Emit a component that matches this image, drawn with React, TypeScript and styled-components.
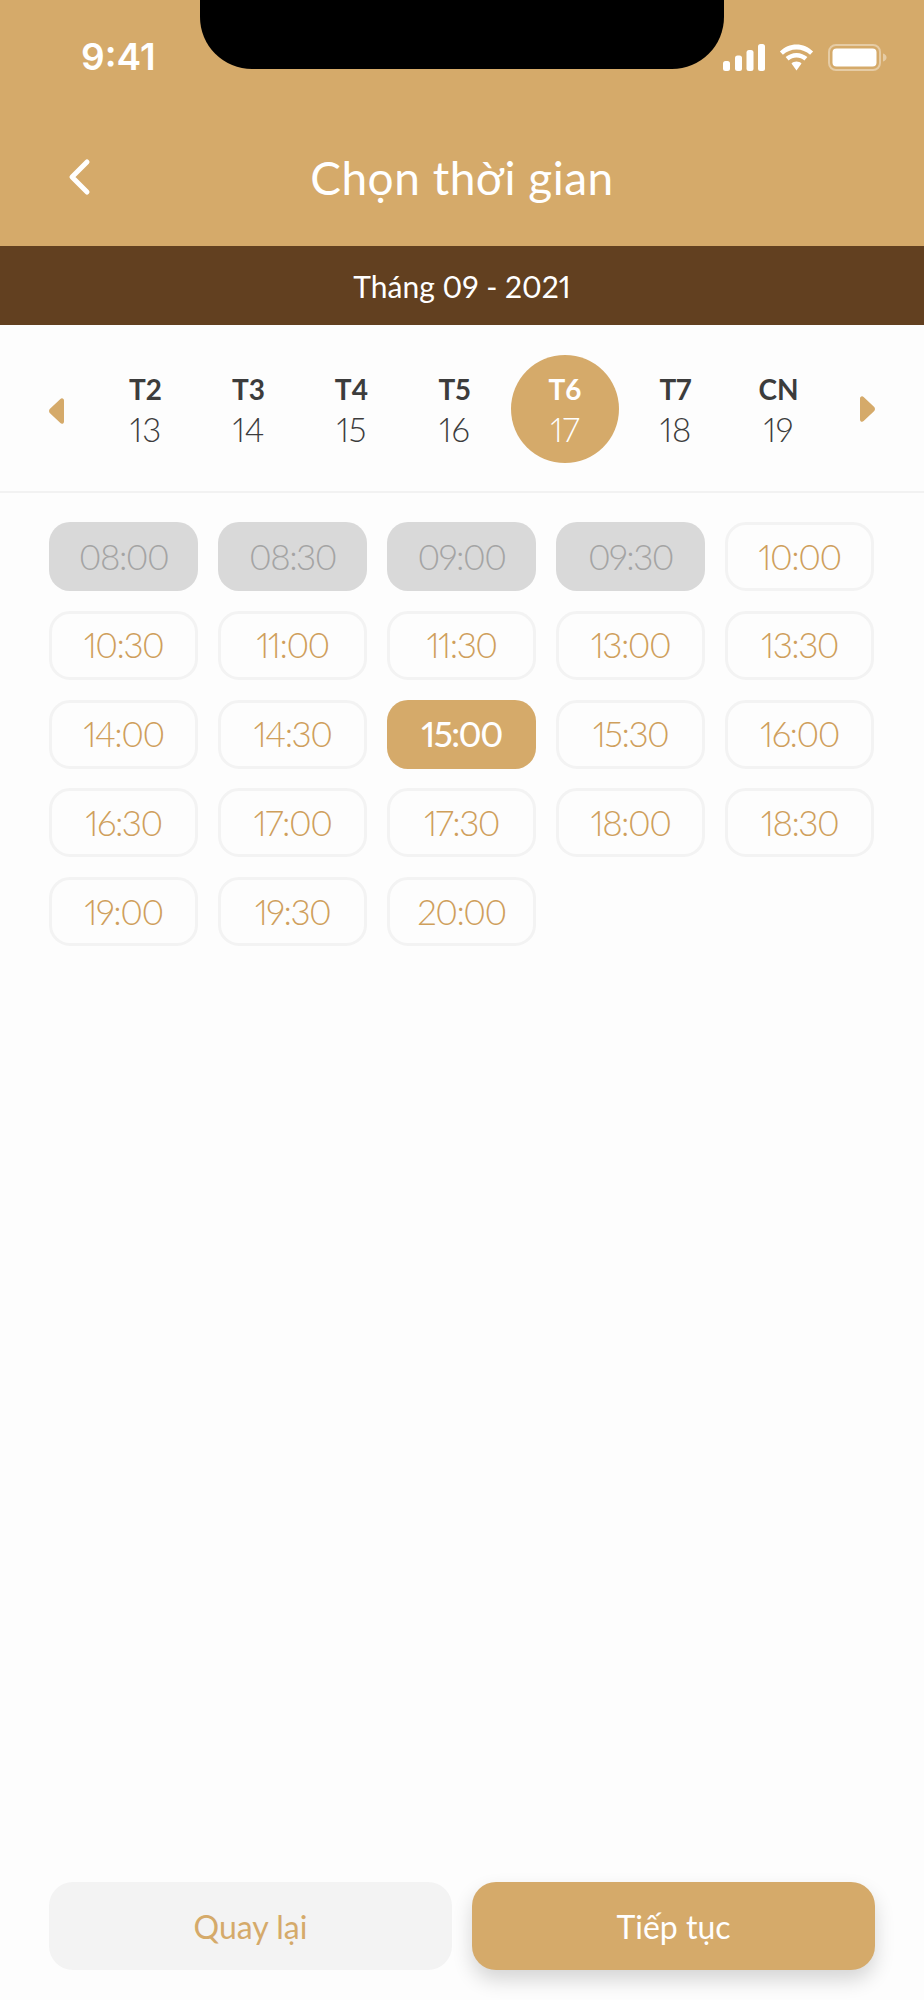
import React from "react";
import styled, { createGlobalStyle } from "styled-components";

const GlobalStyle = createGlobalStyle`
  html, body {
    margin: 0;
    padding: 0;
    background: #fdfdfd;
  }
  * {
    box-sizing: border-box;
  }
`;

const gold = "#d5aa6a";
const font = `"Lato", "Noto Sans", sans-serif`;

const Page = styled.div`
  position: relative;
  width: 924px;
  height: 2000px;
  display: flex;
  flex-direction: column;
  background: #fdfdfd;
  font-family: ${font};
  font-variant-numeric: proportional-nums;
  overflow: hidden;
`;

const Header = styled.header`
  height: 246px;
  background: ${gold};
  display: flex;
  flex-direction: column;
`;

const Notch = styled.div`
  position: absolute;
  top: 0;
  left: 200px;
  width: 524px;
  height: 69px;
  background: #000;
  border-radius: 0 0 52px 52px;
`;

const StatusBar = styled.div`
  height: 78px;
  padding: 36px 37px 0 81px;
  display: flex;
  justify-content: space-between;
  align-items: center;
`;

const Clock = styled.span`
  font-family: "Inter", sans-serif;
  font-size: 37px;
  font-weight: 600;
  color: #fff;
  line-height: 42px;
`;

const StatusIcons = styled.div`
  display: flex;
  align-items: center;
  gap: 13px;
`;

const NavRow = styled.div`
  flex: 1;
  display: flex;
  align-items: center;
  justify-content: center;
  position: relative;
  padding-top: 32px;
`;

const BackButton = styled.button`
  position: absolute;
  left: 66px;
  top: 77px;
  width: 26px;
  height: 44px;
  padding: 0;
  border: none;
  background: none;
  display: flex;
`;

const Title = styled.h1`
  margin: 0;
  font-size: 46px;
  font-weight: 400;
  letter-spacing: 0.5px;
  color: #fff;
  line-height: 56px;
`;

const MonthBar = styled.div`
  height: 79px;
  background: #624020;
  color: #fff;
  display: flex;
  align-items: center;
  justify-content: center;
  font-size: 30px;
  font-weight: 400;
`;

const WeekRow = styled.div`
  height: 168px;
  border-bottom: 2px solid #f2f2f2;
  display: flex;
  align-items: center;
  justify-content: space-between;
  padding: 2px 49px 0;
`;

const Days = styled.div`
  display: flex;
  align-items: center;
`;

const Day = styled.div<{ $selected?: boolean }>`
  width: ${(p) => (p.$selected ? "108px" : "103px")};
  height: 108px;
  margin: ${(p) => (p.$selected ? "0 5px" : "0")};
  border-radius: 50%;
  background: ${(p) => (p.$selected ? gold : "transparent")};
  color: ${(p) => (p.$selected ? "#fff" : "#3c3c3c")};
  display: flex;
  flex-direction: column;
  align-items: center;
  justify-content: center;
`;

const DayName = styled.span`
  font-size: 28px;
  font-weight: 700;
  line-height: 40px;
`;

const DayNumber = styled.span`
  font-size: 33px;
  font-weight: 300;
  line-height: 40px;
`;

const TimeGrid = styled.div`
  display: grid;
  grid-template-columns: repeat(5, 149px);
  grid-auto-rows: 69px;
  column-gap: 20px;
  row-gap: 19.75px;
  padding: 29px 49px 0;
`;

const TimeSlot = styled.div<{ $state: "free" | "taken" | "active" }>`
  display: flex;
  align-items: center;
  justify-content: center;
  padding-bottom: 2px;
  border-radius: 21px;
  font-size: 35px;
  letter-spacing: -1.5px;
  font-weight: ${(p) => (p.$state === "active" ? 500 : 300)};
  border: ${(p) => (p.$state === "free" ? "3px solid #f3f3f3" : "none")};
  background: ${(p) =>
    p.$state === "taken" ? "#d9d9d9" : p.$state === "active" ? gold : "transparent"};
  color: ${(p) =>
    p.$state === "taken" ? "#a4a4a4" : p.$state === "active" ? "#fff" : "#cf9f5c"};
`;

const Footer = styled.div`
  margin-top: auto;
  padding: 0 49px 30px;
  display: grid;
  grid-template-columns: 1fr 1fr;
  gap: 20px;
`;

const ActionButton = styled.button<{ $primary?: boolean }>`
  height: 88px;
  border: none;
  border-radius: 24px;
  font-family: ${font};
  font-size: 32px;
  font-weight: 400;
  background: ${(p) => (p.$primary ? gold : "#f3f3f3")};
  color: ${(p) => (p.$primary ? "#fff" : gold)};
  box-shadow: ${(p) => (p.$primary ? "0 10px 20px rgba(0, 0, 0, 0.16)" : "none")};
`;

const ArrowIcon = styled.svg<{ $flip?: boolean }>`
  fill: ${gold};
  transform: ${(p) => (p.$flip ? "scaleX(-1)" : "none")};
  margin-top: ${(p) => (p.$flip ? "0" : "4px")};
`;

const days = [
  { name: "T2", number: 13 },
  { name: "T3", number: 14 },
  { name: "T4", number: 15 },
  { name: "T5", number: 16 },
  { name: "T6", number: 17, selected: true },
  { name: "T7", number: 18 },
  { name: "CN", number: 19 },
];

const taken = ["08:00", "08:30", "09:00", "09:30"];
const times = [
  "08:00", "08:30", "09:00", "09:30", "10:00",
  "10:30", "11:00", "11:30", "13:00", "13:30",
  "14:00", "14:30", "15:00", "15:30", "16:00",
  "16:30", "17:00", "17:30", "18:00", "18:30",
  "19:00", "19:30", "20:00",
];

function slotState(time: string) {
  if (time === "15:00") return "active";
  return taken.includes(time) ? "taken" : "free";
}

function SignalIcon() {
  return (
    <svg width="42" height="27" viewBox="0 0 42 27" fill="#fff">
      <rect x="0" y="17" width="7" height="10" rx="2.5" />
      <rect x="12" y="11.5" width="7" height="15.5" rx="2.5" />
      <rect x="23.5" y="6" width="7" height="21" rx="2.5" />
      <rect x="35" y="0" width="7" height="27" rx="2.5" />
    </svg>
  );
}

function WifiIcon() {
  return (
    <svg width="37" height="27" viewBox="0 0 37 27" fill="#fff">
      <path d="M18.5 5.5c5.2 0 10 2 13.6 5.3l3-3.4C30.600 3.200 24.800.5 18.500.5S6.400 3.200 1.900 7.400l3 3.400c3.600-3.300 8.400-5.300 13.600-5.300z" />
      <path d="M18.500 13.500c3 0 5.800 1.100 7.900 3l3-3.400c-2.900-2.600-6.700-4.200-10.900-4.200s-8 1.600-10.900 4.200l3 3.400c2.100-1.900 4.900-3 7.900-3z" />
      <path d="M18.500 17.500c-1.900 0-3.700.7-5 1.900l5 7 5-7c-1.300-1.200-3.100-1.900-5-1.900z" />
    </svg>
  );
}

function BatteryIcon() {
  return (
    <svg width="59" height="27" viewBox="0 0 59 27" fill="none">
      <rect x="1" y="1" width="51" height="25" rx="7" stroke="#fff" strokeOpacity="0.4" strokeWidth="2" />
      <rect x="4.500" y="4.500" width="44" height="18" rx="4" fill="#fff" />
      <path d="M55 9.500c2 .6 3.500 2 3.500 4s-1.500 3.400-3.500 4z" fill="#fff" fillOpacity="0.4" />
    </svg>
  );
}

function Arrow({ flip }: { flip?: boolean }) {
  return (
    <ArrowIcon $flip={flip} width="15" height="26" viewBox="0 0 15 26">
      <path d="M15 2.500v21c0 2.200-2.200 3.100-3.600 1.600L1 15.200c-1.300-1.300-1.300-3.100 0-4.400L11.400.900C12.800-.6 15 .3 15 2.500z" />
    </ArrowIcon>
  );
}

export default function App() {
  return (
    <Page>
      <GlobalStyle />
      <Header>
        <StatusBar>
          <Clock>9:41</Clock>
          <StatusIcons>
            <SignalIcon />
            <WifiIcon />
            <BatteryIcon />
          </StatusIcons>
        </StatusBar>
        <NavRow>
          <BackButton aria-label="back">
            <svg width="26" height="44" viewBox="0 0 26 44" fill="none">
              <path d="M21 7 6 22l15 15" stroke="#fff" strokeWidth="5" strokeLinecap="round" strokeLinejoin="round" />
            </svg>
          </BackButton>
          <Title>Chọn thời gian</Title>
        </NavRow>
      </Header>
      <Notch />
      <MonthBar>Tháng 09 - 2021</MonthBar>
      <WeekRow>
        <Arrow />
        <Days>
          {days.map((day) => (
            <Day key={day.name} $selected={day.selected}>
              <DayName>{day.name}</DayName>
              <DayNumber>{day.number}</DayNumber>
            </Day>
          ))}
        </Days>
        <Arrow flip />
      </WeekRow>
      <TimeGrid>
        {times.map((time) => (
          <TimeSlot key={time} $state={slotState(time)}>
            {time}
          </TimeSlot>
        ))}
      </TimeGrid>
      <Footer>
        <ActionButton>Quay lại</ActionButton>
        <ActionButton $primary>Tiếp tục</ActionButton>
      </Footer>
    </Page>
  );
}
